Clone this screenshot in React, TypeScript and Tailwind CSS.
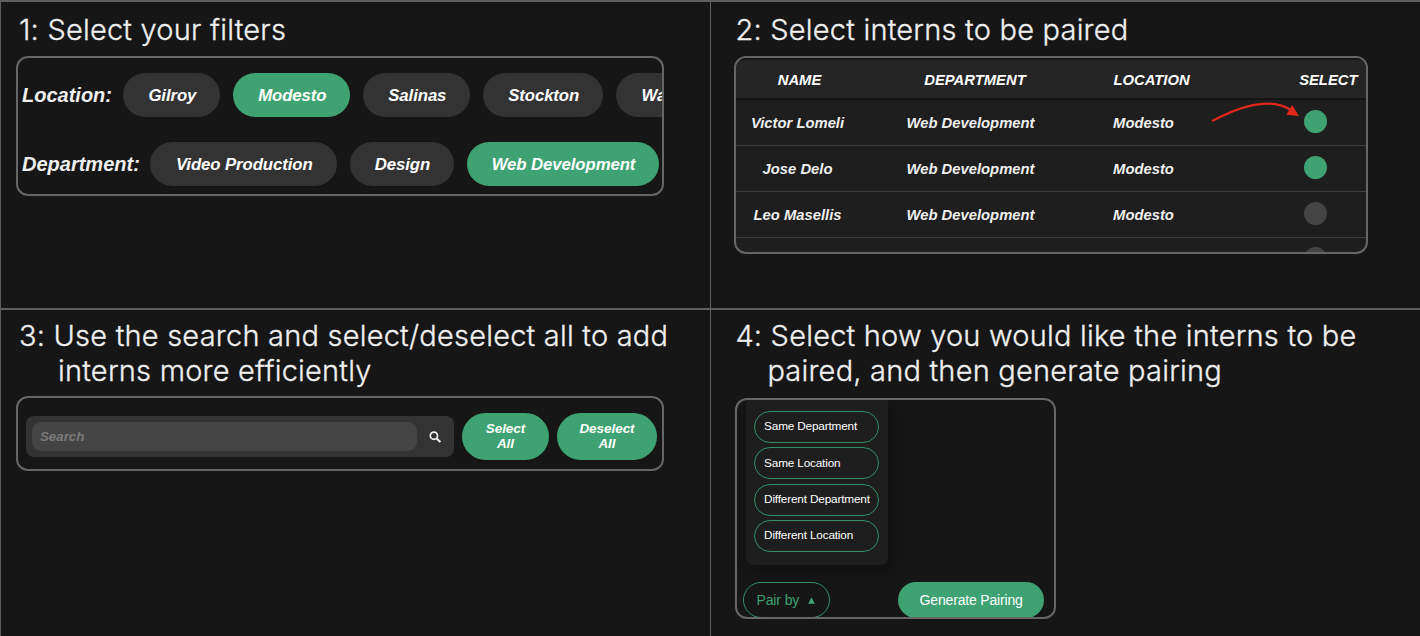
import type { ReactNode } from "react";

function Heading({ first, second, indent }: { first: string; second?: string; indent?: string }) {
  return (
    <h2 className="font-['Inter',sans-serif] text-[29px] leading-[35px] font-light tracking-[0.21px] whitespace-nowrap text-[#efefef] [-webkit-text-stroke:0.3px_#efefef] [font-optical-sizing:none]">
      {first}
      {second && <span className={`block ${indent ?? ""}`}>{second}</span>}
    </h2>
  );
}

function Frame({ className, children }: { className: string; children: ReactNode }) {
  return (
    <div className={`overflow-hidden rounded-xl border-2 border-[#666] ${className}`}>{children}</div>
  );
}

function Pill({ label, width, active }: { label: string; width: string; active?: boolean }) {
  return (
    <button
      className={`h-11 shrink-0 rounded-full pt-px pl-[1.5px] text-[16.8px] font-bold tracking-[-0.1px] text-white italic ${width} ${
        active ? "bg-[#3ea272]" : "bg-[#333]"
      }`}
    >
      {label}
    </button>
  );
}

const rows = [
  { name: "Victor Lomeli", selected: true },
  { name: "Jose Delo", selected: true },
  { name: "Leo Masellis", selected: false },
];

const columns = "grid grid-cols-[124px_222px_124px_160px]";

function Dot({ selected }: { selected: boolean }) {
  return (
    <span
      className={`ml-[98.2px] block size-[23.5px] shrink-0 rounded-full ${selected ? "bg-[#3ea272]" : "bg-[#444]"}`}
    />
  );
}

export default function App() {
  return (
    <main className="grid h-[636px] w-[1420px] grid-cols-[710px_710px] grid-rows-[308px_328px] overflow-hidden bg-[#161616] font-['Liberation_Sans',Arial,sans-serif]">
      <section className="border-t-2 border-l border-[#5e5e5e] pt-[10px] pl-[15px]">
        <div className="pl-[3px]">
          <Heading first="1: Select your filters" />
        </div>
        <Frame className="mt-[9px] flex h-[140px] w-[648px] flex-col gap-[25px] pt-[15px] pl-1">
          <div className="flex gap-[12.5px]">
            <span className="-mb-px w-[88.5px] shrink-0 text-[20px] leading-[45px] font-bold text-[#efefef] italic">
              Location:
            </span>
            <Pill label="Gilroy" width="w-[97.2px]" />
            <Pill label="Modesto" width="w-[117.8px]" active />
            <Pill label="Salinas" width="w-[107.2px]" />
            <Pill label="Stockton" width="w-[120.5px]" />
            <Pill label="Watsonville" width="w-[142px]" />
          </div>
          <div className="flex gap-[12.5px]">
            <span className="-mb-px w-[115.5px] shrink-0 text-[20px] leading-[45px] font-bold text-[#efefef] italic">
              Department:
            </span>
            <Pill label="Video Production" width="w-[187px]" />
            <Pill label="Design" width="w-[104.5px]" />
            <Pill label="Web Development" width="w-[192.5px]" active />
          </div>
        </Frame>
      </section>

      <section className="border-t-2 border-l border-[#5e5e5e] pt-[10px] pl-[22.5px]">
        <div className="pl-[2px]">
          <Heading first="2: Select interns to be paired" />
        </div>
        <Frame className="relative mt-[9px] h-[197.5px] w-[634.5px] bg-[#1e1e1e] text-[14.8px] font-bold text-[#efefef] italic">
          <div className="flex h-[42px] items-center border-t-2 border-b-2 border-[#151515] bg-[#252525] pt-[2px] text-white">
            <span className="w-[128px] text-center">NAME</span>
            <span className="w-[223px] text-center">DEPARTMENT</span>
            <span className="w-[130px] text-center">LOCATION</span>
            <span className="w-[149px] pr-2 text-right">SELECT</span>
          </div>
          {rows.map((r) => (
            <div key={r.name} className={`h-[46px] items-center border-b border-[#3d3d3d] pt-[2px] text-center ${columns}`}>
              <span>{r.name}</span>
              <span>Web Development</span>
              <span>Modesto</span>
              <span className="-mt-1 block">
                <Dot selected={r.selected} />
              </span>
            </div>
          ))}
          <div className={`h-[46px] items-center ${columns}`}>
            <span className="col-start-4 -mt-1 block">
              <Dot selected={false} />
            </span>
          </div>
          <svg className="absolute top-[40px] left-[469px]" width="100" height="30" fill="none">
            <path d="M7 23 C34 9 63 -1.5 85 11.5" stroke="#e0281a" strokeWidth="2.2" />
            <path d="M94 18 L81.3 16.8 L87 7 Z" fill="#e0281a" />
          </svg>
        </Frame>
      </section>

      <section className="border-t-2 border-l border-[#5e5e5e] pt-[8px] pl-[15px]">
        <div className="pl-[3px]">
          <Heading
            first="3: Use the search and select/deselect all to add"
            second="interns more efficiently"
            indent="pl-[39px]"
          />
        </div>
        <Frame className="mt-[8px] flex h-[75px] w-[648px] items-center gap-2 pt-[6px] pl-2">
          <div className="flex h-[41.5px] w-[428px] shrink-0 items-center rounded-lg bg-[#333] pl-1.5">
            <input
              className="h-[29px] w-[384.5px] rounded-[9px] bg-[#444] px-2 text-[13.3px] font-bold text-white italic outline-none placeholder:text-[#7a7a7a]"
              placeholder="Search"
            />
            <svg className="ml-[12.5px]" width="12" height="12" viewBox="0 0 12 12" fill="none" stroke="#efefef">
              <circle cx="4.9" cy="4.7" r="3.6" strokeWidth="1.7" />
              <path d="M7.4 7.2 L11.3 11.1" strokeWidth="2.1" />
            </svg>
          </div>
          <button className="h-[47px] w-[87px] shrink-0 rounded-full bg-[#3ea272] pb-px text-[13.4px] leading-[15px] font-bold text-white italic">
            Select
            <br />
            All
          </button>
          <button className="h-[47px] w-[100px] shrink-0 rounded-full bg-[#3ea272] pb-px text-[13.4px] leading-[15px] font-bold text-white italic">
            Deselect
            <br />
            All
          </button>
        </Frame>
      </section>

      <section className="border-t-2 border-l border-[#5e5e5e] pt-[8px] pl-[24.4px]">
        <Heading
          first="4: Select how you would like the interns to be"
          second="paired, and then generate pairing"
          indent="pl-[32px]"
        />
        <Frame className="mt-[10px] h-[221px] w-[321px]">
          <div className="ml-[8.6px] flex h-[165px] w-[142px] flex-col gap-[4.4px] rounded-b-lg bg-[#1e1e1e] pt-[11px] pl-[8.4px] shadow-[4px_6px_14px_rgba(0,0,0,0.3)]">
            {["Same Department", "Same Location", "Different Department", "Different Location"].map((t) => (
              <button
                key={t}
                className="h-8 w-[125px] shrink-0 rounded-full border border-[#359065] pl-[8.7px] text-left text-[11.8px] tracking-[-0.18px] text-white"
              >
                {t}
              </button>
            ))}
          </div>
          <div className="mt-[17px] flex pl-[5.5px]">
            <button className="flex h-9 w-[87px] items-center gap-[9px] rounded-full border border-[#359065] pt-px pl-[12.5px] text-[14px] tracking-[-0.1px] text-[#3ea272]">
              Pair by
              <svg width="7" height="7" viewBox="0 0 7 7" fill="#3ea272">
                <path d="M3.5 0.3 L6.8 6.7 H0.2 Z" />
              </svg>
            </button>
            <button className="ml-[68px] h-9 w-[146.5px] rounded-full bg-[#3ea272] pt-px text-[14px] tracking-[-0.17px] text-white">
              Generate Pairing
            </button>
          </div>
        </Frame>
      </section>
    </main>
  );
}
